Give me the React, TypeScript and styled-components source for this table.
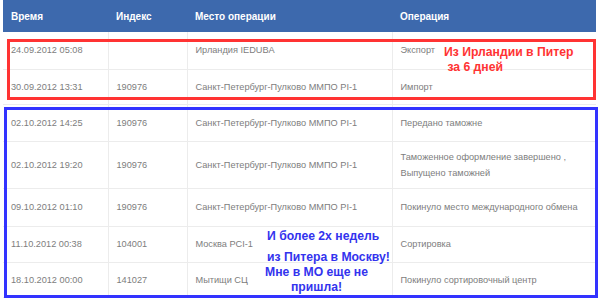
import React from 'react';
import styled, { createGlobalStyle } from 'styled-components';

const GlobalStyle = createGlobalStyle`
  html, body {
    margin: 0;
    padding: 0;
    background: #ffffff;
  }
  body {
    font-family: 'Liberation Sans', Arial, sans-serif;
  }
`;

const Page = styled.div`
  position: relative;
  width: 600px;
  height: 305px;
  padding-left: 3px;
  box-sizing: border-box;
`;

const Table = styled.table`
  width: 593px;
  border-collapse: collapse;
  table-layout: fixed;
`;

const Col = styled.col<{ $w: number }>`
  width: ${(p) => p.$w}px;
`;

const HeadRow = styled.tr`
  background: #3d69ad;
  height: 32px;
`;

const HeadCell = styled.th`
  padding: 0 8px;
  text-align: left;
  color: #ffffff;
  font-size: 10px;
  font-weight: bold;
  vertical-align: middle;
`;

const Row = styled.tr<{ $h: number }>`
  height: ${(p) => p.$h}px;
  border-bottom: 1px solid #ececec;
`;

const Cell = styled.td`
  padding: 0 8px;
  border-left: 1px solid #ececec;
  color: #7d7d7d;
  font-size: 9.2px;
  line-height: 16px;
  vertical-align: middle;
  white-space: nowrap;
  overflow: hidden;

  &:first-child {
    border-left: none;
  }
`;

const Frame = styled.div<{ $color: string }>`
  position: absolute;
  border: 3px solid ${(p) => p.$color};
  box-sizing: border-box;
  pointer-events: none;
`;

const Note = styled.div<{ $color: string }>`
  position: absolute;
  color: ${(p) => p.$color};
  font-family: 'Liberation Sans', Arial, sans-serif;
  font-weight: bold;
  font-size: 12.2px;
  line-height: 15px;
  white-space: nowrap;
`;

const columns = [
  { title: 'Время', width: 105 },
  { title: 'Индекс', width: 79 },
  { title: 'Место операции', width: 205 },
  { title: 'Операция', width: 204 },
];

const rows = [
  { time: '24.09.2012 05:08', index: '', place: 'Ирландия IEDUBA', op: ['Экспорт'], h: 37 },
  { time: '30.09.2012 13:31', index: '190976', place: 'Санкт-Петербург-Пулково ММПО PI-1', op: ['Импорт'], h: 35 },
  { time: '02.10.2012 14:25', index: '190976', place: 'Санкт-Петербург-Пулково ММПО PI-1', op: ['Передано таможне'], h: 37 },
  {
    time: '02.10.2012 19:20',
    index: '190976',
    place: 'Санкт-Петербург-Пулково ММПО PI-1',
    op: ['Таможенное оформление завершено ,', 'Выпущено таможней'],
    h: 47,
  },
  { time: '09.10.2012 01:10', index: '190976', place: 'Санкт-Петербург-Пулково ММПО PI-1', op: ['Покинуло место международного обмена'], h: 38 },
  { time: '11.10.2012 00:38', index: '104001', place: 'Москва PCI-1', op: ['Сортировка'], h: 36 },
  { time: '18.10.2012 00:00', index: '141027', place: 'Мытищи СЦ', op: ['Покинуло сортировочный центр'], h: 35 },
];

const App: React.FC = () => {
  return (
    <Page>
      <GlobalStyle />
      <Table>
        <colgroup>
          {columns.map((c) => (
            <Col key={c.title} $w={c.width} />
          ))}
        </colgroup>
        <thead>
          <HeadRow>
            {columns.map((c) => (
              <HeadCell key={c.title}>{c.title}</HeadCell>
            ))}
          </HeadRow>
        </thead>
        <tbody>
          {rows.map((r, i) => (
            <Row key={i} $h={r.h}>
              <Cell>{r.time}</Cell>
              <Cell>{r.index}</Cell>
              <Cell>{r.place}</Cell>
              <Cell>
                {r.op.map((line, j) => (
                  <React.Fragment key={j}>
                    {j > 0 && <br />}
                    {line}
                  </React.Fragment>
                ))}
              </Cell>
            </Row>
          ))}
        </tbody>
      </Table>

      <Frame $color="#ff3333" style={{ left: 7, top: 39, width: 589, height: 61 }} />
      <Frame $color="#3333ff" style={{ left: 4, top: 107, width: 594, height: 191 }} />

      <Note $color="#ff3333" style={{ left: 444, top: 45 }}>
        Из Ирландии в Питер
        <br />
        &nbsp;за 6 дней
      </Note>

      <Note $color="#3333ee" style={{ left: 267, top: 229 }}>
        И более 2х недель
      </Note>
      <Note $color="#3333ee" style={{ left: 267, top: 250 }}>
        из Питера в Москву!
      </Note>
      <Note $color="#3333ee" style={{ left: 265, top: 265, textAlign: 'center' }}>
        Мне в МО еще не
        <br />
        пришла!
      </Note>
    </Page>
  );
};

export default App;
